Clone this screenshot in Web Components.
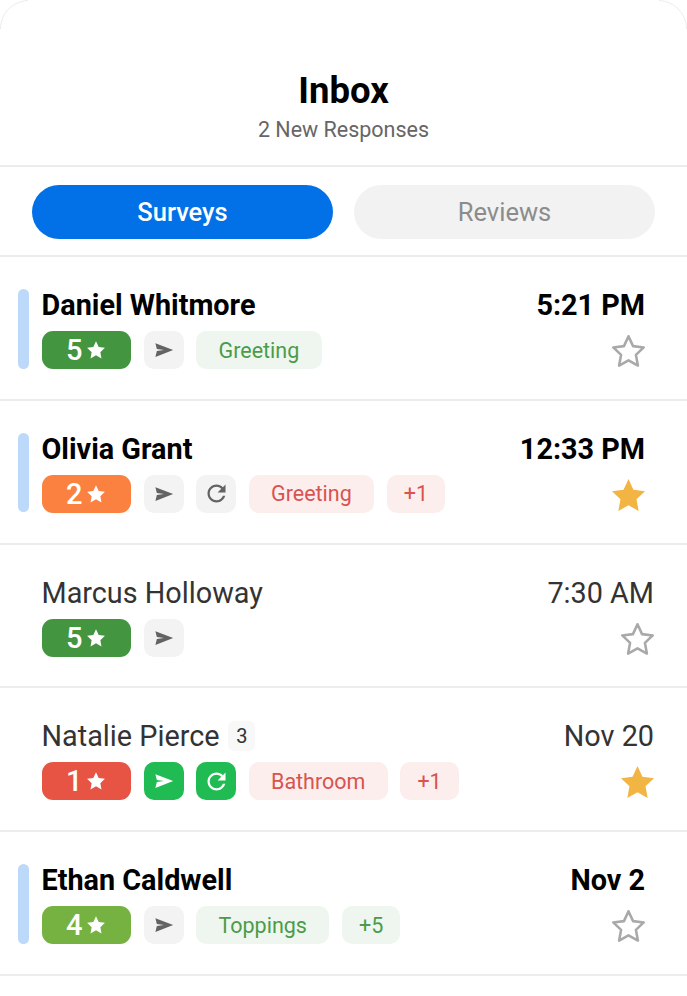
<!DOCTYPE html>
<html lang="en">
<head>
<meta charset="utf-8">
<title>Inbox</title>
<style>
  html, body { margin: 0; padding: 0; background: #fff; }
  body { font-family: Roboto, "Liberation Sans", sans-serif; }
</style>
</head>
<body>
<inbox-app>
  <inbox-header slot="header" title="Inbox" subtitle="2 New Responses"></inbox-header>
  <inbox-tabs slot="tabs" active="Surveys" other="Reviews"></inbox-tabs>

  <inbox-row unread name="Daniel Whitmore" time="5:21 PM">
    <rating-badge value="5" color="#439540"></rating-badge>
    <icon-chip icon="send"></icon-chip>
    <tag-chip tone="green">Greeting</tag-chip>
  </inbox-row>

  <inbox-row unread starred name="Olivia Grant" time="12:33 PM">
    <rating-badge value="2" color="#fb8140"></rating-badge>
    <icon-chip icon="send"></icon-chip>
    <icon-chip icon="refresh"></icon-chip>
    <tag-chip tone="red">Greeting</tag-chip>
    <tag-chip tone="red" compact>+1</tag-chip>
  </inbox-row>

  <inbox-row name="Marcus Holloway" time="7:30 AM">
    <rating-badge value="5" color="#439540"></rating-badge>
    <icon-chip icon="send"></icon-chip>
  </inbox-row>

  <inbox-row starred name="Natalie Pierce" count="3" time="Nov 20">
    <rating-badge value="1" color="#e85444"></rating-badge>
    <icon-chip icon="send" active></icon-chip>
    <icon-chip icon="refresh" active></icon-chip>
    <tag-chip tone="red">Bathroom</tag-chip>
    <tag-chip tone="red" compact>+1</tag-chip>
  </inbox-row>

  <inbox-row unread name="Ethan Caldwell" time="Nov 2">
    <rating-badge value="4" color="#76b242"></rating-badge>
    <icon-chip icon="send"></icon-chip>
    <tag-chip tone="green">Toppings</tag-chip>
    <tag-chip tone="green" compact>+5</tag-chip>
  </inbox-row>
</inbox-app>

<script>
const STAR = "M12 1.6l3.2 6.9 7.5.9-5.5 5.2 1.4 7.5L12 18.4l-6.6 3.7 1.4-7.5L1.3 9.4l7.5-.9z";
const ICONS = {
  send: "M2.6 19.5 22 12 2.6 4.5 4.2 10.8 12 12 4.2 13.2z",
  refresh: "M17.65 6.35C16.2 4.9 14.21 4 12 4c-4.42 0-7.99 3.58-7.99 8s3.57 8 7.99 8c3.73 0 6.84-2.55 7.73-6h-2.08c-.82 2.33-3.04 4-5.65 4-3.31 0-6-2.69-6-6s2.69-6 6-6c1.66 0 3.14.69 4.22 1.78L13 11h7V4l-2.35 2.35z"
};
const esc = s => String(s ?? "").replace(/[&<>"]/g, c => ({"&":"&amp;","<":"&lt;",">":"&gt;",'"':"&quot;"}[c]));

class InboxApp extends HTMLElement {
  constructor() {
    super();
    this.attachShadow({mode: "open"}).innerHTML = `
      <style>
        :host { display: block; position: relative; width: 687px; height: 996px; overflow: hidden; background: #fff;
                font-family: Roboto, "Liberation Sans", sans-serif; }
        .corner { position: absolute; top: 0; width: 32px; height: 32px; fill: none; stroke: #ececec; stroke-width: 1; }
        .l { left: 0; }
        .r { right: 0; transform: scaleX(-1); }
      </style>
      <slot name="header"></slot>
      <slot name="tabs"></slot>
      <slot></slot>
      <svg class="corner l" viewBox="0 0 32 32"><path d="M.5 29C.5 14 12 1.5 28 .5"/></svg>
      <svg class="corner r" viewBox="0 0 32 32"><path d="M.5 29C.5 14 12 1.5 28 .5"/></svg>`;
  }
}

class InboxHeader extends HTMLElement {
  connectedCallback() {
    if (this.shadowRoot) return;
    this.attachShadow({mode: "open"}).innerHTML = `
      <style>
        :host { display: flex; flex-direction: column; align-items: center; box-sizing: border-box; height: 167px;
                padding-top: 71px; border-bottom: 2px solid #ececec; }
        h1 { margin: 0; font-size: 36.5px; line-height: 40px; font-weight: 700; color: #000; }
        p { margin: 0; padding-top: 6px; font-size: 21.5px; line-height: 25px; color: #666; }
      </style>
      <h1>${esc(this.getAttribute("title"))}</h1>
      <p>${esc(this.getAttribute("subtitle"))}</p>`;
  }
}

class InboxTabs extends HTMLElement {
  connectedCallback() {
    if (this.shadowRoot) return;
    this.attachShadow({mode: "open"}).innerHTML = `
      <style>
        :host { display: flex; gap: 21px; box-sizing: border-box; height: 90px; padding: 18px 32px 16px; border-bottom: 2px solid #ececec; }
        div { flex: 1; height: 54px; border-radius: 27px; display: flex; align-items: center; justify-content: center;
              font-size: 25.5px; }
        .on { background: #0270e6; color: #fff; font-weight: 500; }
        .off { background: #f2f2f2; color: #8c8c8c; }
      </style>
      <div class="on">${esc(this.getAttribute("active"))}</div>
      <div class="off">${esc(this.getAttribute("other"))}</div>`;
  }
}

class InboxRow extends HTMLElement {
  connectedCallback() {
    if (this.shadowRoot) return;
    const starred = this.hasAttribute("starred");
    const count = this.getAttribute("count");
    this.attachShadow({mode: "open"}).innerHTML = `
      <style>
        :host { display: flex; box-sizing: border-box; height: 143.8px; padding: 32px 33px 30px 18px; border-bottom: 2px solid #ececec; }
        :host([unread]) { padding-right: 42px; }
        .bar { flex: none; width: 11px; height: 79.5px; margin-right: 12.5px; border-radius: 6px; background: transparent; }
        :host([unread]) .bar { background: #bcd9f9; }
        .main { flex: 1; min-width: 0; }
        .name { display: flex; align-items: center; height: 32px; margin-bottom: 10px; font-size: 28.8px; line-height: 32px; color: #333; }
        :host([unread]) .name { font-weight: 700; color: #000; }
        .count { margin-left: 9px; width: 27px; height: 30px; border-radius: 6px; background: #f8f8f8;
                 display: flex; align-items: center; justify-content: center; font-size: 20px; color: #333; }
        .chips { display: flex; gap: 12.5px; height: 38px; }
        .side { display: flex; flex-direction: column; align-items: flex-end; }
        .time { height: 32px; margin-bottom: 14px; font-size: 28.8px; line-height: 32px; color: #333; }
        :host([unread]) .time { font-weight: 700; color: #000; }
        .star { display: block; width: 33px; height: 32px; }
      </style>
      <div class="bar"></div>
      <div class="main">
        <div class="name"><span>${esc(this.getAttribute("name"))}</span>${count ? `<span class="count">${esc(count)}</span>` : ""}</div>
        <div class="chips"><slot></slot></div>
      </div>
      <div class="side">
        <div class="time">${esc(this.getAttribute("time"))}</div>
        ${starred
          ? `<svg class="star" viewBox="1.3 1.6 21.4 20.5" preserveAspectRatio="none"><path d="${STAR}" fill="#f2b443"/></svg>`
          : `<svg class="star" viewBox=".4 .7 23.2 22.4" preserveAspectRatio="none"><path d="${STAR}" fill="none" stroke="#a9a9a9" stroke-width="1.8" stroke-linejoin="round"/></svg>`}
      </div>`;
  }
}

class RatingBadge extends HTMLElement {
  connectedCallback() {
    if (this.shadowRoot) return;
    this.attachShadow({mode: "open"}).innerHTML = `
      <style>
        :host { display: flex; align-items: center; justify-content: center; gap: 4px; flex: none; width: 89.5px; height: 38px; border-radius: 11px;
                background: ${esc(this.getAttribute("color"))}; color: #fff; font-size: 29px; font-weight: 500; }
        svg { width: 20px; height: 20px; fill: #fff; display: block; }
      </style>
      <span>${esc(this.getAttribute("value"))}</span>
      <svg viewBox="0 0 24 24"><path d="${STAR}"/></svg>`;
  }
}

class IconChip extends HTMLElement {
  connectedCallback() {
    if (this.shadowRoot) return;
    const name = this.getAttribute("icon");
    const size = name === "refresh" ? 27 : 22;
    this.attachShadow({mode: "open"}).innerHTML = `
      <style>
        :host { display: flex; align-items: center; justify-content: center; flex: none; width: 40px; height: 38px; border-radius: 10px;
                background: #f3f3f3; }
        :host([active]) { background: #21bb53; }
        svg { width: ${size}px; height: ${size}px; fill: #636363; display: block; }
        :host([active]) svg { fill: #fff; }
      </style>
      <svg viewBox="0 0 24 24"><path d="${ICONS[name]}"/></svg>`;
  }
}

class TagChip extends HTMLElement {
  constructor() {
    super();
    this.attachShadow({mode: "open"}).innerHTML = `
      <style>
        :host { display: flex; align-items: center; flex: none; height: 38px; padding: 0 22.5px; box-sizing: border-box; border-radius: 10px;
                font-size: 21.5px; }
        :host([compact]) { padding: 0 17px; }
        :host([tone=green]) { background: #eff6ef; color: #4a9c4a; }
        :host([tone=red]) { background: #fdeeee; color: #d9534f; }
      </style>
      <slot></slot>`;
  }
}

customElements.define("inbox-app", InboxApp);
customElements.define("inbox-header", InboxHeader);
customElements.define("inbox-tabs", InboxTabs);
customElements.define("inbox-row", InboxRow);
customElements.define("rating-badge", RatingBadge);
customElements.define("icon-chip", IconChip);
customElements.define("tag-chip", TagChip);
</script>
</body>
</html>
